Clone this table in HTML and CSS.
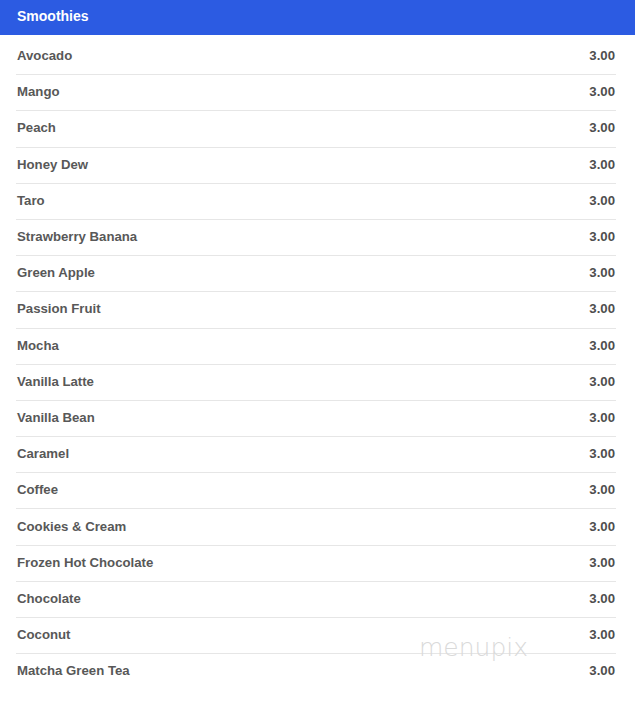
FILE: index.html
```html
<!DOCTYPE html>
<html>
<head>
<meta charset="utf-8">
<link rel="stylesheet" href="styles.css">
</head>
<body>
<div class="menu">
  <div class="header">Smoothies</div>
  <ul class="list">
    <li class="row"><span class="name">Avocado</span><span class="price">3.00</span></li>
    <li class="row"><span class="name">Mango</span><span class="price">3.00</span></li>
    <li class="row"><span class="name">Peach</span><span class="price">3.00</span></li>
    <li class="row"><span class="name">Honey Dew</span><span class="price">3.00</span></li>
    <li class="row"><span class="name">Taro</span><span class="price">3.00</span></li>
    <li class="row"><span class="name">Strawberry Banana</span><span class="price">3.00</span></li>
    <li class="row"><span class="name">Green Apple</span><span class="price">3.00</span></li>
    <li class="row"><span class="name">Passion Fruit</span><span class="price">3.00</span></li>
    <li class="row"><span class="name">Mocha</span><span class="price">3.00</span></li>
    <li class="row"><span class="name">Vanilla Latte</span><span class="price">3.00</span></li>
    <li class="row"><span class="name">Vanilla Bean</span><span class="price">3.00</span></li>
    <li class="row"><span class="name">Caramel</span><span class="price">3.00</span></li>
    <li class="row"><span class="name">Coffee</span><span class="price">3.00</span></li>
    <li class="row"><span class="name">Cookies &amp; Cream</span><span class="price">3.00</span></li>
    <li class="row"><span class="name">Frozen Hot Chocolate</span><span class="price">3.00</span></li>
    <li class="row"><span class="name">Chocolate</span><span class="price">3.00</span></li>
    <li class="row"><span class="name">Coconut</span><span class="price">3.00</span></li>
    <li class="row"><span class="name">Matcha Green Tea</span><span class="price">3.00</span></li>
  </ul>
  <div class="watermark">menupix</div>
</div>
</body>
</html>
```
FILE: styles.css
```css
html, body {
  margin: 0;
  padding: 0;
  background: #ffffff;
}
.menu {
  position: relative;
  width: 635px;
  height: 718px;
  font-family: "Liberation Sans", Arial, sans-serif;
}
.header {
  background: #2c5be2;
  color: #ffffff;
  font-weight: bold;
  font-size: 14px;
  height: 35px;
  line-height: 33px;
  padding-left: 17px;
  box-sizing: border-box;
}
.list {
  list-style: none;
  margin: 0 19px 0 16px;
  padding: 4px 0 0 0;
}
.row {
  display: flex;
  justify-content: space-between;
  align-items: center;
  height: 35.2px;
  box-sizing: content-box;
  border-bottom: 1px solid #e6e6e6;
  font-size: 13.2px;
  color: #585858;
  padding: 0 1px 0 1px;
}
.row > span {
  position: relative;
  top: -1px;
}
.row:last-child {
  border-bottom: none;
}
.name {
  font-weight: bold;
}
.price {
  font-weight: bold;
  color: #4e4e4e;
}
.watermark {
  position: absolute;
  left: 419px;
  top: 633px;
  font-family: "DejaVu Sans", sans-serif;
  font-weight: 200;
  font-size: 25px;
  color: #dadada;
}
```
